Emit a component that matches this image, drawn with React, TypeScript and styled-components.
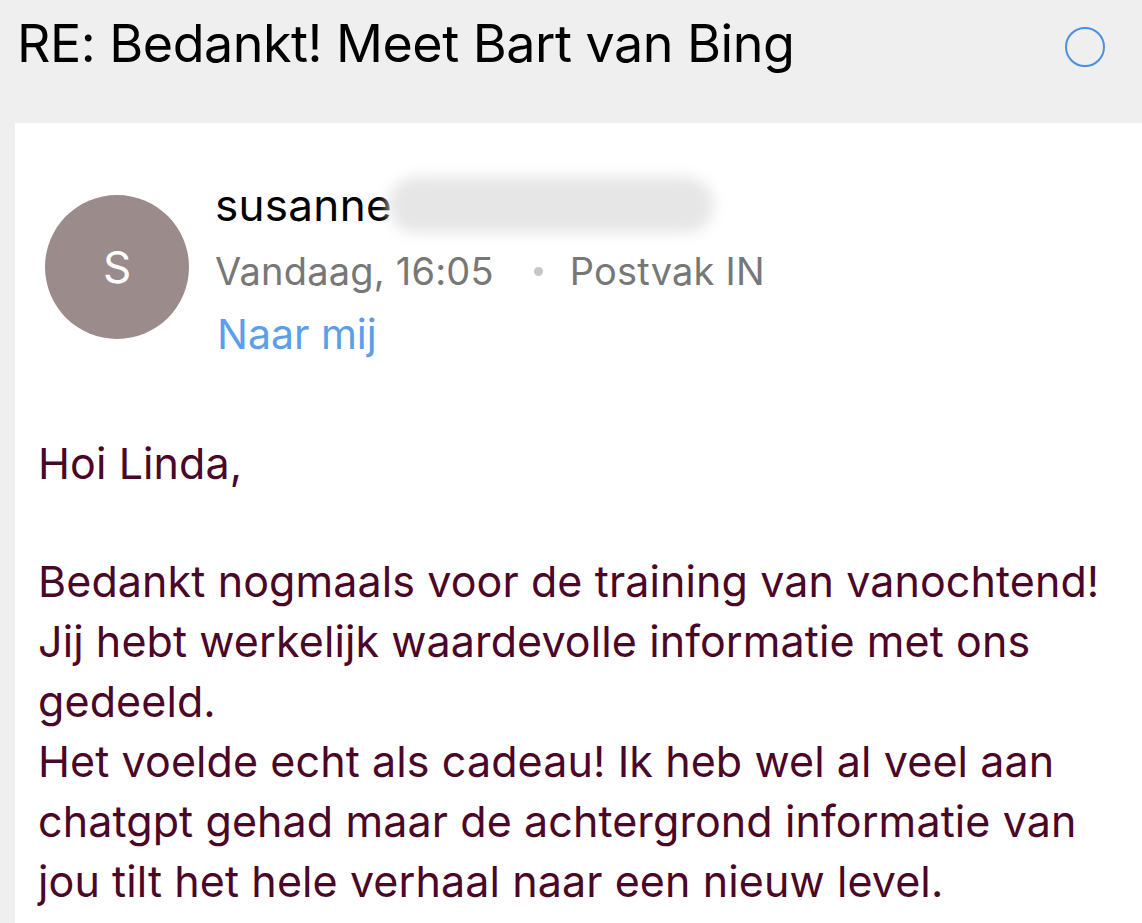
import React from "react";
import styled, { createGlobalStyle } from "styled-components";

const Global = createGlobalStyle`
  html, body { margin: 0; padding: 0; background: #efefef; }
  body { font-family: Inter, "Noto Sans", sans-serif; overflow: hidden; }
`;

const Page = styled.div`
  width: 1142px;
  height: 923px;
  background: #efefef;
  display: flex;
  flex-direction: column;
  overflow: hidden;
`;

const Header = styled.header`
  height: 123px;
  flex-shrink: 0;
  display: flex;
  align-items: flex-start;
  justify-content: space-between;
  padding: 0 37px 0 17px;
  box-sizing: border-box;
`;

const Title = styled.h1`
  margin: 14px 0 0;
  font-size: 52px;
  font-weight: 400;
  line-height: 60px;
  color: #000;
  letter-spacing: -0.5px;
`;

const StatusRing = styled.div`
  width: 40px;
  height: 40px;
  margin-top: 27px;
  border-radius: 50%;
  border: 2px solid #4a90e2;
  box-sizing: border-box;
`;

const Card = styled.main`
  flex: 1;
  margin-left: 15px;
  background: #fff;
  padding: 72px 0 0 23px;
  box-sizing: border-box;
`;

const SenderRow = styled.section`
  display: flex;
  align-items: flex-start;
  gap: 26px;
  padding-left: 7px;
`;

const Avatar = styled.div`
  width: 144px;
  height: 144px;
  border-radius: 50%;
  background: #9c8b8b;
  color: #fff;
  display: flex;
  align-items: center;
  justify-content: center;
  font-size: 44px;
  flex-shrink: 0;
`;

const Meta = styled.div`
  display: flex;
  flex-direction: column;
  margin-top: -24px;
`;

const NameLine = styled.div`
  display: flex;
  align-items: center;
  font-size: 44px;
  line-height: 68px;
  color: #000;
  letter-spacing: 0.3px;
`;

const Blur = styled.span`
  display: inline-block;
  width: 326px;
  height: 56px;
  margin-left: -4px;
  border-radius: 28px;
  background: #e6e6e6;
  filter: blur(7px);
`;

const InfoLine = styled.div`
  display: flex;
  align-items: center;
  font-size: 38px;
  line-height: 65px;
  color: #777;
  letter-spacing: 0.2px;
`;

const Dot = styled.span`
  width: 9px;
  height: 9px;
  border-radius: 50%;
  background: #c4c7c9;
  margin: 0 27px 0 40px;
`;

const ToLine = styled.div`
  font-size: 41px;
  line-height: 60px;
  color: #5b9ee9;
  margin-left: 2px;
`;

const Body = styled.article`
  margin-top: 69px;
  color: #4b0727;
  font-size: 43px;
  line-height: 60px;
  letter-spacing: 0.1px;
`;

const Para = styled.p`
  margin: 0 0 58px;
`;

export default function App() {
  return (
    <Page>
      <Global />
      <Header>
        <Title>RE: Bedankt! Meet Bart van Bing</Title>
        <StatusRing />
      </Header>
      <Card>
        <SenderRow>
          <Avatar>S</Avatar>
          <Meta>
            <NameLine>
              susanne
              <Blur />
            </NameLine>
            <InfoLine>
              Vandaag, 16:05
              <Dot />
              Postvak IN
            </InfoLine>
            <ToLine>Naar mij</ToLine>
          </Meta>
        </SenderRow>
        <Body>
          <Para>Hoi Linda,</Para>
          <Para>
            Bedankt nogmaals voor de training van vanochtend!
            <br />
            Jij hebt werkelijk waardevolle informatie met ons
            <br />
            gedeeld.
            <br />
            Het voelde echt als cadeau! Ik heb wel al veel aan
            <br />
            chatgpt gehad maar de achtergrond informatie van
            <br />
            jou tilt het hele verhaal naar een nieuw level.
          </Para>
        </Body>
      </Card>
    </Page>
  );
}
